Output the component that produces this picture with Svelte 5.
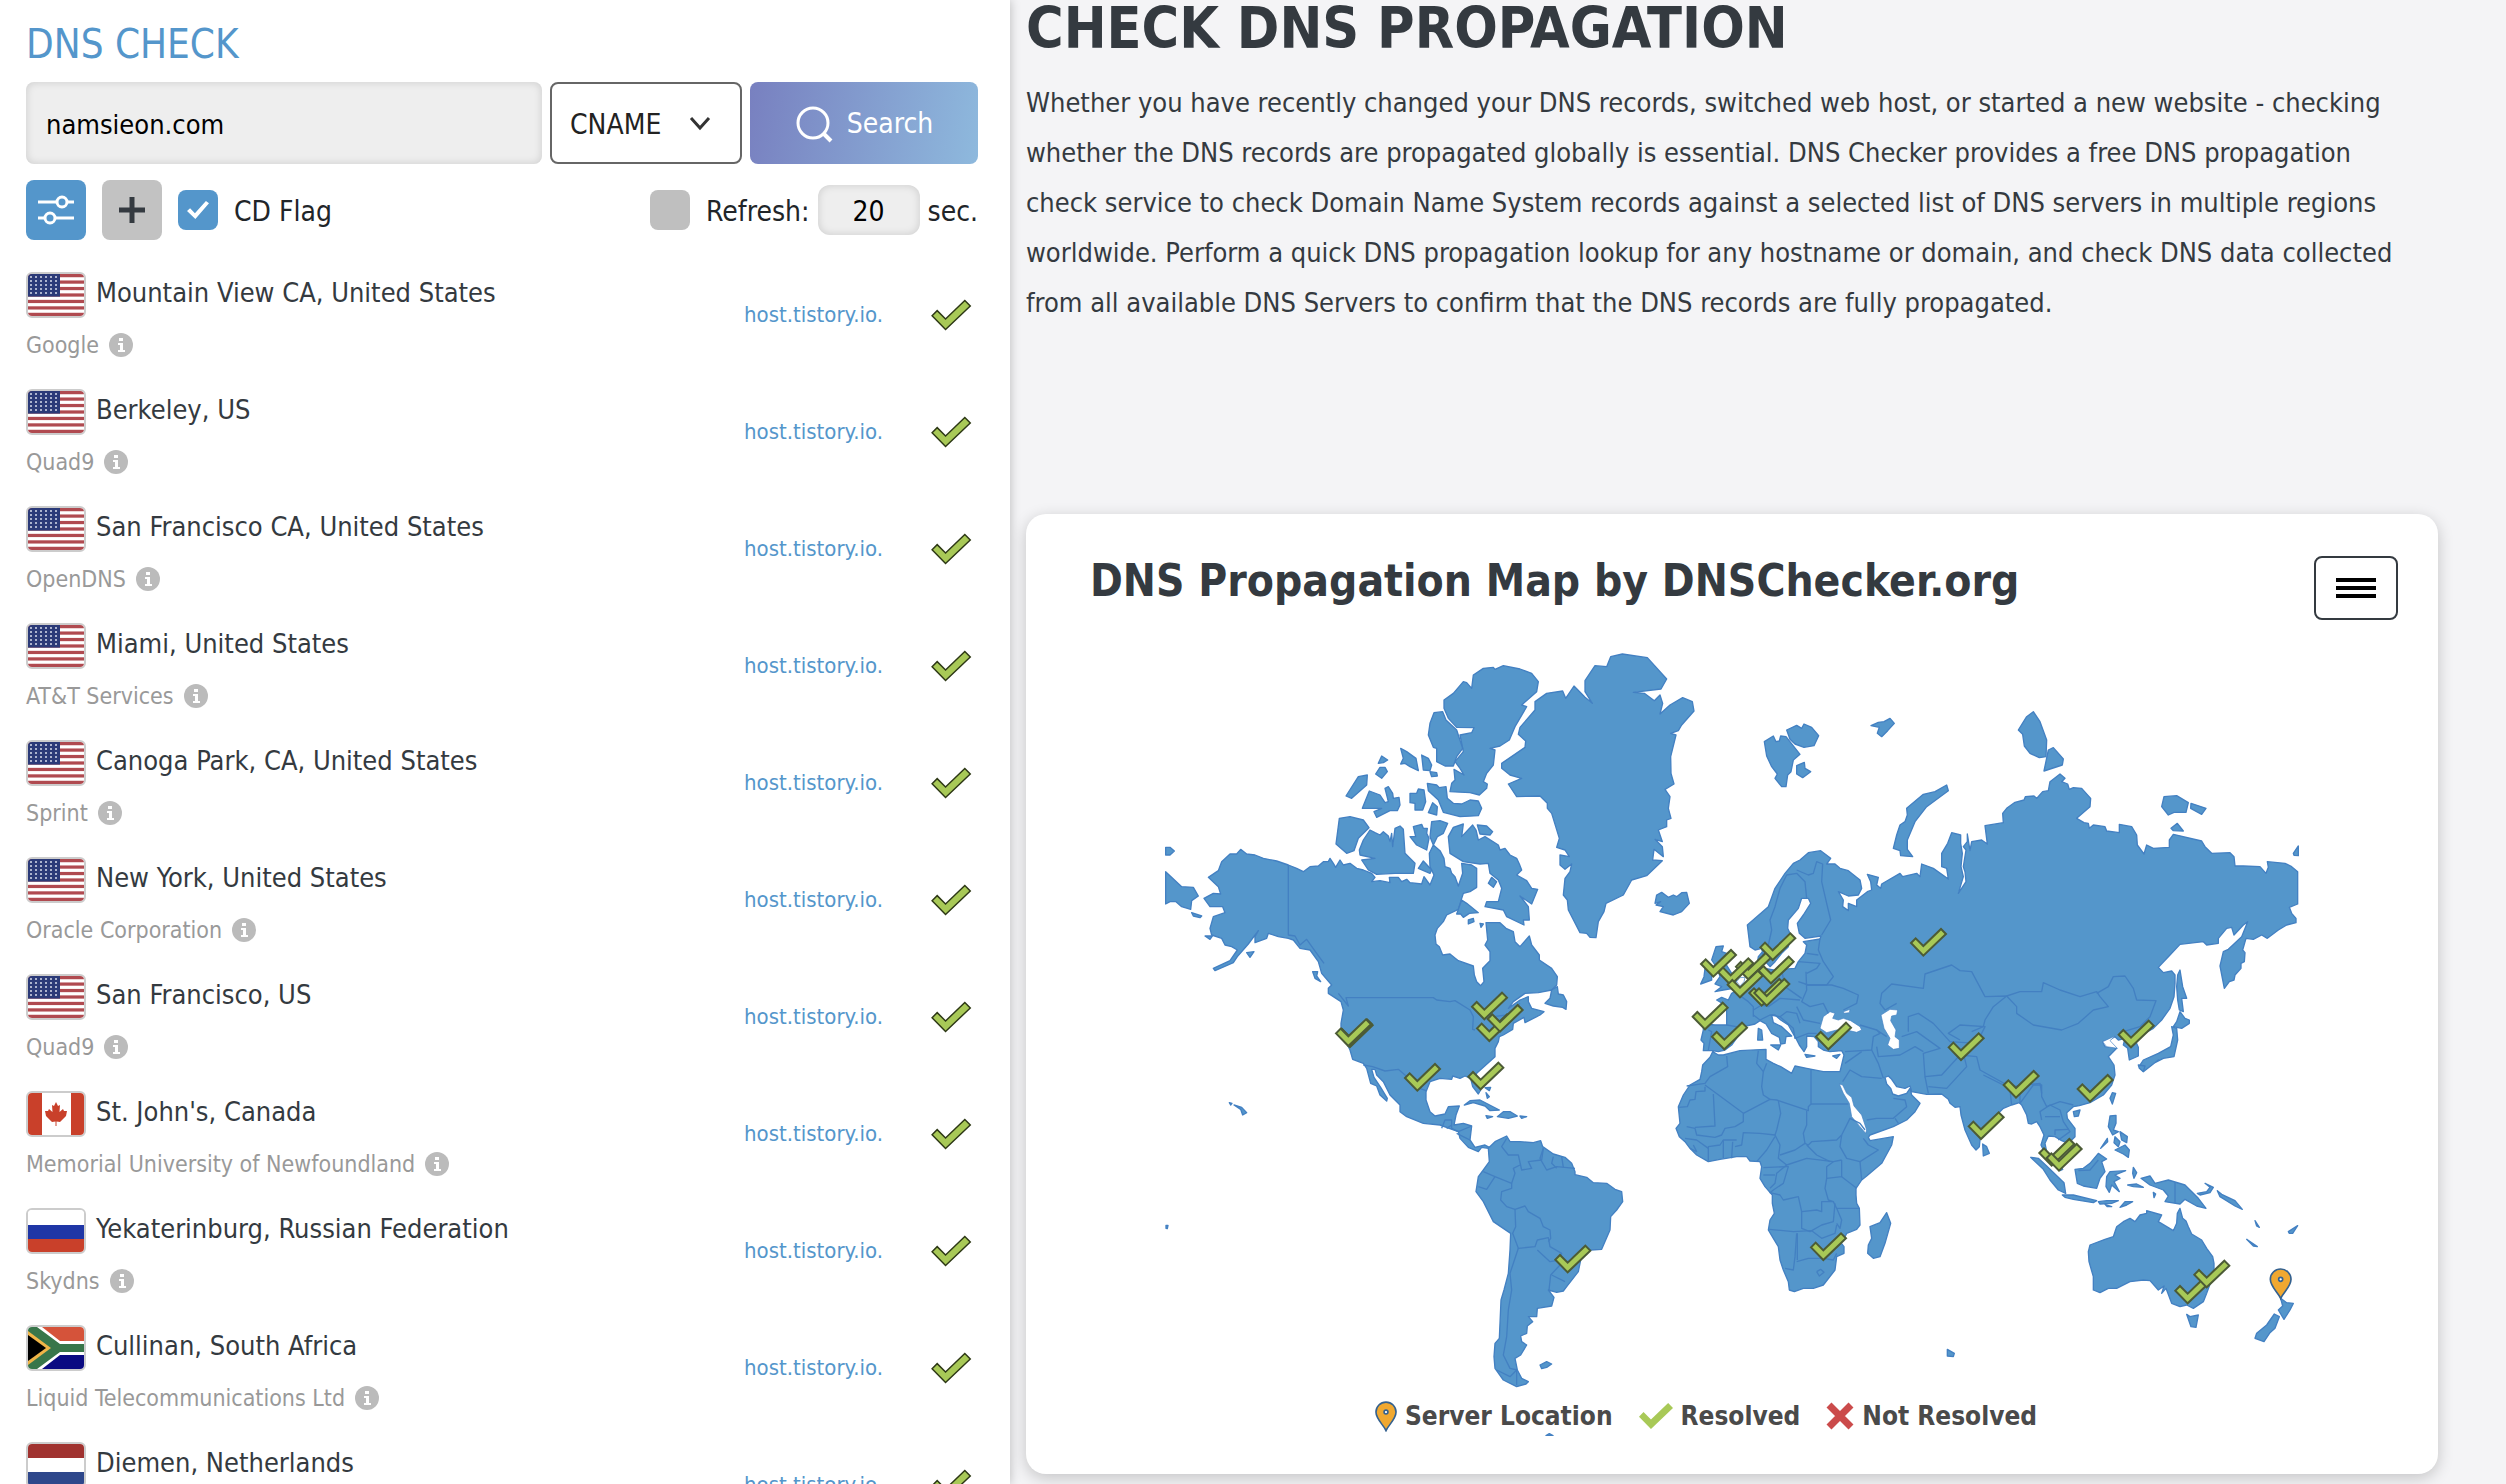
<script>
	let domain = 'namsieon.com';
	let recordType = 'CNAME';
	let cdFlag = true;
	let autoRefresh = false;
	let interval = '20';

	const recordTypes = ['A', 'AAAA', 'CNAME', 'MX', 'NS', 'TXT'];

	const servers = [
		{ place: 'Mountain View CA, United States', provider: 'Google', flag: 'us' },
		{ place: 'Berkeley, US', provider: 'Quad9', flag: 'us' },
		{ place: 'San Francisco CA, United States', provider: 'OpenDNS', flag: 'us' },
		{ place: 'Miami, United States', provider: 'AT&T Services', flag: 'us' },
		{ place: 'Canoga Park, CA, United States', provider: 'Sprint', flag: 'us' },
		{ place: 'New York, United States', provider: 'Oracle Corporation', flag: 'us' },
		{ place: 'San Francisco, US', provider: 'Quad9', flag: 'us' },
		{ place: "St. John's, Canada", provider: 'Memorial University of Newfoundland', flag: 'ca' },
		{ place: 'Yekaterinburg, Russian Federation', provider: 'Skydns', flag: 'ru' },
		{ place: 'Cullinan, South Africa', provider: 'Liquid Telecommunications Ltd', flag: 'za' },
		{ place: 'Diemen, Netherlands', provider: '', flag: 'nl' }
	];

	const tick = 'M-37 -38L-23 -52L0 -29L53 -80L68 -65L0 0Z';

	// moves a list of points by (dx, dy)
	function at(dx, dy, points) {
		return points
			.trim()
			.split(/\s+/)
			.map((p) => {
				const [x, y] = p.split(',').map(Number);
				return `${x + dx},${y + dy}`;
			})
			.join(' ');
	}

	const americas = [
		at(0, 0, '272,628 290,642 315,645 340,655 380,663 415,675 440,685 460,695 480,680 505,678 520,665 535,665 540,655 550,670 557,682 570,660 580,675 600,670 620,685 640,690 665,700 675,712 665,725 690,722 720,728 718,712 745,712 755,725 770,718 780,728 815,732 822,710 840,735 852,705 840,680 838,640 850,615 870,632 882,655 885,680 900,685 905,700 915,710 925,738 938,700 935,670 965,675 980,685 980,742 960,755 940,760 932,785 925,808 890,825 880,845 862,865 855,885 858,912 868,920 878,945 900,942 925,962 970,978 973,1005 980,1025 992,1037 1002,1025 998,985 1020,962 1020,935 1005,915 1013,900 1008,848 1050,848 1068,865 1090,875 1095,905 1110,920 1138,888 1145,915 1168,945 1168,960 1205,985 1222,1010 1220,1035 1205,1050 1165,1058 1125,1060 1090,1085 1075,1105 1110,1080 1135,1070 1135,1085 1145,1105 1182,1115 1170,1125 1125,1148 1122,1132 1090,1150 1088,1168 1060,1185 1048,1190 1045,1205 1035,1225 1035,1250 1000,1282 980,1300 975,1318'),
		at(0, 1080, '985,250 992,270 985,282 968,260 962,235 945,228 930,235 908,228 905,238 870,235 840,245 828,275 828,300 840,335 855,348 885,342 895,320 928,318 918,345 912,375 940,370 965,378 960,420 975,442 1005,435 1018,442 1035,425 1070,408 1080,425 1110,425 1150,428 1172,422 1178,440 1210,462 1245,472 1265,490 1275,515 1275,524 1310,532 1330,548'),
		at(750, 1260, '620,370 645,388 665,395 668,425 650,450 632,470 630,510 605,568 572,570 545,585 540,610 535,635 500,680 490,693 470,697 445,690 462,712 455,738 412,745 410,770 385,770 398,785 382,798 380,820 362,828 365,845 380,855 362,885 345,895 352,930 365,955 385,965 378,972 350,980 310,960 285,925 282,890 285,850 298,835 300,790 303,720 312,690 325,640 330,570 332,520 280,485 250,425 228,395 235,350 250,330 268,305 265,265 245,262 235,275 205,262 180,235 175,215 120,195 70,190 20,170 0,155'),
		at(0, 1080, '750,335 750,315 720,285 700,245 680,225 675,208 665,208 672,232 692,262 712,295 710,303 690,285 680,258 662,250 650,205 640,190 608,178 600,150 583,115 573,80'),
		at(0, 0, '573,1150 580,1110 573,1085 535,1060 535,1045 545,1035 515,1000 505,965 480,930 450,925 430,900 415,895 385,890 355,880 350,895 315,908 315,890 325,872 295,912 262,950 250,968 195,992 190,985 240,962 262,930 245,920 225,915 215,895 185,885 180,865 190,830 225,818 218,800 180,800 162,775 190,760 212,762 205,740 175,712 205,692 215,665 240,642 260,642')
	].join(' ');

	const oldWorld = [
		at(930, 0, '1020,660 1045,638 1082,632 1112,655 1100,672 1125,672 1140,685 1165,692 1200,720 1205,745 1195,765 1165,768 1135,755 1150,780 1148,800 1165,812 1165,790 1190,800 1190,780 1222,755 1235,750 1232,725 1222,703 1255,712 1250,735 1262,745'),
		at(2190, 120, '5,612 60,580 68,590 110,580 120,590 125,552 160,565 205,597 200,565 185,560 185,520 203,490 215,458 242,465 242,490 247,520 243,560 250,590 235,640 258,605 255,575 250,560 258,510 250,500 262,485 262,462 270,512 275,485 305,480 322,492 315,437 370,428 368,400 380,385 405,367 432,360 436,350 462,348 470,355 488,335 505,332 510,305 540,282 555,295 545,305 563,312 568,328 580,323 605,325 632,355 630,380 590,415 612,428 625,430 628,445 640,435 675,440 680,453 718,458 718,433 755,440 770,465 772,495 792,522 800,495 820,505 868,502 868,480 880,463 965,483 975,500 995,520 1050,518 1062,530 1065,558 1090,558 1140,560 1158,580 1165,562 1162,545 1215,550 1235,560 1253,575 1253,672 1228,682 1235,700 1248,715 1248,728 1220,735 1195,750 1162,775 1145,765 1120,778 1098,775 1088,810 1095,818 1093,845 1083,850 1083,865 1065,885 1062,900 1048,905 1033,925 1020,858 1030,815 1045,808 1085,770 1103,725 1090,735 1062,765 1055,742 1040,745 1015,775 1015,790 980,795 970,785 900,793 870,825 835,862 850,878 875,873 885,885 885,910'),
		at(2130, 960, '942,110 930,145 905,180 880,205 850,222 825,240 835,262 835,288 808,300 803,265 790,255 795,235 775,240 765,230 748,240 728,245 735,260 762,262 770,265 745,290 762,315 765,345 755,375 730,405 690,428 658,437 640,440 620,458 622,475 645,505 645,530 625,550 605,542 585,530 565,528 555,550 560,575 590,600 608,628 600,632 575,608 550,570 543,555 552,525 540,500 530,485 515,492 505,490 500,465 485,435 478,428 455,435 430,445 395,480 370,500 360,540 358,560 348,570 335,555 315,510 303,465 300,440 285,442 270,430 265,418 245,402 200,403 155,395 150,378 135,385 110,380 95,358 85,348 75,352 80,372 92,385 98,402 115,408 140,400 150,385 155,405 180,430 165,455 140,480 100,500 30,525'),
		at(1530, 780, '625,712 630,722 700,710 695,735 665,790 620,828 605,840 588,865 588,885 590,910 598,925 600,975 590,988 560,1000 555,1010 540,1025 552,1040 552,1055'),
		at(750, 1260, '1332,580 1310,590 1305,630 1270,675 1240,685 1210,685 1183,695 1168,690 1165,665 1150,630 1140,600 1135,560 1120,535 1105,510 1110,480 1123,460 1117,430 1117,405 1095,380 1080,355 1085,320 1080,305 1050,303 1040,290 1010,290 960,298 925,305 890,285 870,265 855,245 838,230 828,205 840,190 835,140 850,105 870,75 900,58'),
		at(1530, 780, '125,515 128,495 150,472 158,455 175,465 190,465 240,452 318,448 318,478 340,490 362,500 395,520 405,498 440,505 490,515 540,515 552,465 545,452 510,455 490,450 475,440 475,425 462,410 440,408 440,440 432,455 418,435 408,415 400,402 385,375 362,360 345,345 335,345 340,368 365,380 395,408 378,410 375,430 362,432 358,412 335,400 318,372 300,362 285,372 258,378 240,400 215,435 195,450 175,455 158,452 130,452 132,430 123,420 130,390 130,372 165,375 200,375 200,330 190,312 170,300 185,292 205,300 215,280 250,262 270,230 285,210 292,190 295,170 312,150 315,175 305,195'),
		at(930, 0, '915,985 940,990 1005,985 1015,965 1035,940 1040,915 1030,905 1080,897 1083,888 1035,895 1018,880 1012,850 1030,825 1052,790 1045,775 1025,775 1015,805 985,840 983,865 992,885 985,920 965,940 945,965 930,980 912,960 905,925 885,930 870,920 862,855 925,800 945,745 975,700 1000,670')
	].join(' ');

	const islands = [
		// Greenland
		at(930, 0, '225,185 260,160 308,153 317,175 342,138 375,172 397,190 375,155 375,122 405,77 440,80 452,50 487,42 562,53 620,117 603,147 520,157 553,160 583,182 600,165 608,190 600,222 630,195 668,173 697,185 702,213 665,255 655,272 632,280 648,285 632,350 633,400 642,432 615,448 630,470 625,505 633,535 620,540 620,560 595,570 607,605 585,598 607,620 610,650 582,628 578,660 607,662 560,707 515,720 490,765 438,790 432,815 415,845 408,893 390,892 380,880 360,878 325,810 322,780 310,765 315,715 330,695 335,672 315,688 300,675 300,645 328,650 315,630 290,622 298,595 275,520 262,505 262,490 240,468 170,470 145,432 185,415 150,405 125,385 125,370 195,322 197,303 175,283 180,262 225,210'),
		// Canadian Arctic
		'965,145 970,105 1000,85 1030,82 1035,88 1060,77 1110,87 1145,100 1165,125 1160,155 1115,195 1130,200 1095,260 1078,300 1050,318 1020,325 1035,330 1030,375 1010,400 1000,425 1012,432 1010,445 988,465 960,458 900,455 905,430 915,420 912,388 942,405 930,385 915,365 940,335 930,285 965,278 972,263 920,262 895,235 882,205 882,180 910,160 940,125 950,128',
		'852,218 878,215 888,240 920,270 938,325 920,350 910,378 885,378 860,365 860,325 850,322 835,285 840,250',
		'752,325 770,335 798,355 805,392 780,380 765,370 752,372 760,355',
		'815,345 835,355 845,375 840,392 820,390',
		'840,395 860,398 862,408 845,410',
		'695,348 713,360 700,368 685,370',
		'690,382 705,382 712,395 695,415 677,402',
		'625,410 652,405 650,435 605,475 588,468',
		'658,453 690,465 705,488 715,485 705,445 715,440 728,460 730,475 747,472 750,495 742,512 720,512 680,532 672,515 695,505 637,505',
		'780,460 800,460 805,447 822,450 827,485 818,510 795,510 795,490 780,488',
		'832,430 860,435 868,443 888,440 892,475 910,490 935,492 960,480 985,483 995,505 985,527 930,530 880,517 865,480 835,452',
		'848,488 862,500 860,525 835,518',
		'568,535 600,530 640,540 657,563 625,595 612,632 590,640 558,612',
		'628,630 640,600 660,570 675,578 690,585 700,575 715,588 720,605 725,580 728,620 735,565 750,558 760,568 765,640 795,670 790,700 735,700 680,703 655,690 635,660 675,655 630,645',
		'790,560 815,553 820,565 832,565 830,580 837,595 830,630 800,615 780,590 797,590',
		'845,545 870,542 893,550 880,580 862,590 850,615 840,590',
		'820,663 845,690 840,700 805,685',
		'895,590 910,562 940,552 935,590 968,555 978,570 985,600 1005,590 1045,615 1050,630 1065,625 1080,645 1100,655 1108,672 1115,690 1100,705 1130,722 1145,745 1163,748 1145,792 1110,768 1135,800 1138,840 1120,840 1122,855 1070,830 1060,810 1005,800 1010,785 1045,785 1055,745 1045,720 1020,700 1015,670 990,672 940,665 900,640',
		'982,555 1010,558 1028,575 1020,585 990,582',
		'1025,712 1040,725 1030,742 1015,730',
		'935,780 950,790 985,818 958,820 940,832 932,822 920,822',
		'955,840 970,835 972,845 955,852',
		'990,850 1000,852 993,862',
		// Newfoundland and the Bering coast
		'1222,1040 1225,1062 1240,1065 1250,1085 1248,1108 1238,1102 1210,1098 1185,1090 1200,1075 1205,1050',
		'47,695 95,740 130,742 145,768 125,782 122,808 95,800 78,785 60,785 47,792',
		'47,622 60,622 73,633 60,645 47,645',
		'125,818 155,828 150,833 130,828',
		'290,938 312,935 300,952',
		'488,995 503,995 500,1008 512,1025 495,1015',
		'165,888 187,888 180,898',
		// Hawaii, the Caribbean
		at(0, 1080, '252,315 275,322 290,338 278,345 272,328'),
		at(0, 1080, '238,308 246,310 242,315'),
		at(0, 1080, '48,676 54,676 52,686 48,685'),
		at(0, 1080, '943,315 960,302 990,300 1048,330 1020,332 1005,318 970,308'),
		at(0, 1080, '1042,350 1060,335 1080,335 1102,348 1075,355'),
		at(0, 1080, '1008,347 1028,350 1012,355'),
		at(0, 1080, '1110,348 1130,350 1115,355'),
		at(0, 1080, '1008,278 1018,290 1012,295'),
		at(0, 1080, '1005,263 1022,262 1018,272'),
		at(750, 1260, '420,915 440,905 455,912 440,922 425,926'),
		at(750, 1260, '438,1127 448,1121 459,1127'),
		// Europe
		at(930, 0, '585,790 590,765 605,757 625,772 640,765 650,770 665,758 680,757 688,790 665,815 640,825 600,815 610,800 588,795 602,785'),
		at(930, 0, '768,920 790,918 785,935 800,940 790,960 815,1000 830,1020 820,1045 790,1050 765,1055 785,1040 765,1032 780,1010 772,985 755,960'),
		at(930, 0, '735,985 755,990 755,1020 722,1032 732,1010'),
		at(930, 0, '895,1165 905,1170 908,1200 893,1200'),
		at(930, 0, '932,1215 962,1215 955,1230'),
		at(930, 0, '1035,1243 1065,1248 1040,1252'),
		at(930, 0, '1118,1248 1140,1243 1130,1255'),
		at(930, 0, '913,305 940,288 948,305 958,303 962,288 978,290 1020,343 1000,360 993,395 983,405 978,440 965,440 945,415 952,402 935,380 920,348'),
		at(930, 0, '980,270 1010,256 1025,265 1032,252 1055,262 1076,287 1062,317 1032,322 1005,312 990,298'),
		at(930, 0, '1010,377 1033,367 1035,385 1052,395 1028,413 1010,402'),
		at(930, 0, '1233,257 1255,247 1272,245 1290,235 1303,250 1283,272 1265,290 1252,280 1258,262'),
		// Russian Arctic
		at(2190, 120, '80,385 130,343 165,335 200,315 205,332 140,380 105,425 82,480 82,508 98,530 62,527 60,512 40,505 50,465 60,435 75,425 82,405'),
		at(2190, 120, '415,150 440,110 460,95 480,125 500,180 498,230 478,233 450,220 433,198 428,163'),
		at(2190, 120, '505,210 520,203 550,237 547,255 492,273'),
		at(2190, 120, '852,350 890,347 925,368 918,397 882,397 865,405 845,380'),
		at(2190, 120, '933,370 978,385 965,403 932,385'),
		at(2190, 120, '873,445 892,430 910,453 880,452'),
		at(2190, 120, '1240,520 1255,498 1255,527 1242,526'),
		// Sakhalin, Japan, Taiwan
		at(2190, 120, '900,870 908,920 920,955 905,955 910,995 898,990 893,960 890,920 893,885'),
		at(2190, 120, '900,995 915,1015 928,1020 928,1030 905,1045 880,1040 890,1025'),
		at(2190, 120, '875,1040 890,1045 893,1080 882,1130 850,1135 825,1148 835,1140 790,1175 780,1155 790,1140 835,1120 872,1100 880,1065'),
		at(2130, 960, '835,315 855,318 850,335 838,325'),
		at(2130, 960, '757,398 767,400 757,432 750,415'),
		at(2130, 960, '640,455 660,450 655,468 643,470'),
		at(2130, 960, '368,552 380,560 388,580 370,588'),
		// South-east Asia
		at(2130, 960, '750,468 768,466 768,490 760,510 775,515 758,525 745,500'),
		at(2130, 960, '780,515 802,530 800,548 785,540'),
		at(2130, 960, '765,570 795,555 808,570 805,592 790,582'),
		at(2130, 960, '742,535 743,545 722,565'),
		at(2130, 960, '765,530 780,545 775,560 762,548'),
		at(2130, 960, '512,592 535,595 560,618 612,668 617,700 595,690 570,660 550,628'),
		at(2130, 960, '607,705 640,705 710,722 700,728 640,718 615,712'),
		at(2130, 960, '645,628 670,625 690,610 715,580 740,597 725,605 735,635 720,655 710,685 670,678 652,670'),
		at(2130, 960, '740,650 750,635 797,632 765,645 780,655 762,665 778,695 755,675 748,697 738,680'),
		at(2130, 960, '820,622 830,638 822,655 818,640'),
		at(2130, 960, '803,675 830,672 850,682 820,680'),
		at(2130, 960, '715,725 740,722 775,722 755,730 720,732'),
		at(2130, 960, '780,742 795,725 818,725 800,735'),
		at(2130, 960, '735,733 755,740 742,740'),
		at(2130, 960, '880,697 887,702 882,713'),
		at(2130, 960, '843,655 870,648 885,670 925,660 975,675 1015,715 1038,745 1010,738 975,718 960,732 915,725 925,708 910,690 870,675'),
		at(2130, 960, '1012,700 1040,695 1050,682 1035,670 1060,682 1050,698 1020,705'),
		at(2130, 960, '1072,692 1085,703 1125,722 1147,748 1125,738 1080,710'),
		at(2130, 960, '1185,782 1198,802 1190,798'),
		at(2130, 960, '1160,838 1192,860 1180,858'),
		at(2130, 960, '1285,815 1313,797 1298,820 1288,820'),
		// Australia, New Zealand
		at(2130, 960, '690,855 735,838 760,830 770,800 790,785 810,775 825,785 840,765 860,760 860,752 905,765 895,785 940,812 950,790 952,760 960,745 968,775 978,783 985,800 995,822 1025,840 1040,865 1058,890 1062,910 1062,940 1040,1000 1030,1025 1000,1045 980,1035 960,1040 935,1030 918,985 905,1000 912,978 895,990 870,962 850,960 810,965 770,985 745,985 720,998 700,990 700,950 687,905 685,875'),
		at(2130, 960, '980,1063 990,1070 1015,1065 1008,1102 993,1100'),
		at(2130, 960, '1262,1015 1280,1028 1300,1030 1290,1050 1272,1078 1255,1050 1268,1038'),
		at(2130, 960, '1243,1062 1258,1070 1245,1105 1230,1118 1212,1145 1185,1135 1190,1120 1220,1095'),
		at(2130, 960, '262,1168 283,1180 280,1190 262,1188'),
		// Madagascar
		at(750, 1260, '1460,458 1472,490 1455,550 1440,590 1420,595 1403,580 1405,555 1415,535 1410,500 1440,488')
	];

	const waters = [
		at(1530, 780, '538,552 548,555 560,580 575,592 582,618 605,645 620,690 617,700 600,680 575,650 568,610 550,580'),
		at(1530, 780, '480,385 490,350 510,335 525,340 518,355 535,360 550,355 572,362 600,380 605,390 590,397 560,390 530,390 500,398'),
		at(1530, 780, '550,335 570,328 568,338 552,340'),
		at(1530, 780, '663,345 690,328 713,330 710,345 695,348 692,362 708,390 705,410 718,420 718,445 700,448 683,435 690,415 672,385'),
		at(1530, 780, '230,245 240,233 255,232 252,245 240,258'),
		at(2190, 120, '668,1085 705,1068 690,1082 712,1105 680,1100')
	];

	const borders = [
		// North America
		'415,675 415,885 435,888 450,915 470,898 500,940 522,970',
		'565,1060 595,1098 588,1073 850,1073 860,1080 900,1085 915,1082 960,1110 970,1130 968,1168 975,1170',
		'1030,1130 1070,1125 1110,1090',
		at(0, 1080, '640,195 668,200 705,213 745,208 765,225 800,262 828,272'),
		at(0, 1080, '875,385 885,360 905,360 905,385 925,395 965,378'),
		at(0, 1080, '905,375 890,385'),
		at(0, 1080, '920,400 950,415 960,420'),
		// South America
		at(750, 1260, '320,235 305,260 325,285 355,285 365,330 395,325 385,305 425,300 430,265'),
		at(750, 1260, '430,265 420,295 440,330 470,320 525,325'),
		at(750, 1260, '460,290 455,310 470,325'),
		at(750, 1260, '485,290 490,322'),
		at(750, 1260, '250,335 285,350 335,370 345,340 340,325 360,315'),
		at(750, 1260, '235,380 260,388 285,350'),
		at(750, 1260, '335,370 335,385 305,395 302,420 320,440 345,448 375,438 385,455 420,475 430,500 450,510 452,535 445,545'),
		at(750, 1260, '345,448 347,500 338,520 355,565 405,560 412,540 445,533 450,560 485,580 480,600 450,605 412,570'),
		at(750, 1260, '355,565 330,640 335,690 325,750 320,830 310,885 330,925 352,930'),
		at(750, 1260, '480,615 452,645 447,690'),
		at(750, 1260, '455,645 495,665'),
		at(750, 1260, '290,930 330,950 350,930 350,975'),
		// Africa
		at(1530, 780, '200,468 203,500 150,530 135,550 80,558'),
		at(1530, 780, '135,560 135,573 108,575 105,598 90,600 82,620 55,622'),
		at(1530, 780, '135,555 250,640 250,665 225,680 195,685 185,705 165,712 110,705 105,685 80,680'),
		at(1530, 780, '160,582 165,678 105,682'),
		at(1530, 780, '250,640 330,598 350,600 445,632 445,620 453,612 453,508'),
		at(1530, 780, '453,612 565,612'),
		at(1530, 780, '295,452 290,490 310,515 305,560 310,585 330,598'),
		at(1530, 780, '310,515 320,490'),
		at(1530, 780, '355,602 362,640 350,690 345,705 300,700 250,698 245,735 225,740'),
		at(1530, 780, '440,632 440,675 430,700 435,730 445,735 455,725 530,720 545,705'),
		at(1530, 780, '545,705 570,655 600,670 615,690'),
		at(1530, 780, '545,705 540,740 560,775 600,785 655,750 625,735 610,715'),
		at(1530, 780, '600,785 605,840'),
		at(1530, 780, '345,705 360,735 355,775 380,795 440,775 520,785 545,780'),
		at(1530, 780, '435,730 405,750 360,765'),
		at(1530, 780, '440,735 470,765 510,785'),
		at(1530, 780, '345,710 320,750 290,785'),
		at(1530, 780, '310,803 380,800 385,800 370,850 340,870 330,878 360,885 370,900 415,890 425,935 470,930 485,935 485,905 520,905'),
		at(1530, 780, '380,795 350,820 345,850 330,865'),
		at(1530, 780, '310,825 345,825'),
		at(1530, 780, '545,780 545,830 500,835 495,865 505,900 520,905 530,925 598,925'),
		at(1530, 780, '545,830 590,865'),
		at(1530, 780, '500,835 500,800 520,785'),
		at(1530, 780, '425,935 425,985 450,995 485,975 520,965 525,910'),
		at(1530, 780, '530,925 545,960 540,985 530,970'),
		at(1530, 780, '328,988 400,995 455,992 485,1015 525,1000 530,975'),
		at(1530, 780, '412,1000 412,1080'),
		at(750, 1260, '1190,520 1185,590 1180,630 1155,625'),
		at(750, 1260, '1190,605 1225,595 1270,595 1300,600 1310,580'),
		at(750, 1260, '1250,635 1262,628 1272,637 1258,648 1250,635'),
		at(1530, 780, '145,782 145,740 180,735 190,720 230,720'),
		at(1530, 780, '190,775 190,720'),
		at(1530, 780, '215,775 218,725'),
		at(1530, 780, '100,735 110,755 90,745'),
		at(1530, 780, '145,745 110,720 75,715'),
		// Europe
		at(930, 0, '925,915 935,870 930,840 945,800 960,745 980,705 1010,700 1035,725 1040,775'),
		at(930, 0, '1010,690 1045,705 1060,700 1070,665 1088,672 1085,725 1100,790 1112,840 1085,885'),
		at(930, 0, '1080,895 1075,930 1090,965 1120,1010 1100,1035 1045,1035 1015,1025'),
		at(930, 0, '1040,940 1075,945'),
		at(930, 0, '1015,965 1080,970 1070,985 1040,1000'),
		at(930, 0, '1038,995 1040,1050 1025,1085 1050,1100 1090,1090 1105,1120'),
		at(930, 0, '1040,1035 1115,1035 1150,1045 1195,1065 1190,1090 1150,1110'),
		at(930, 0, '965,990 975,1040 1025,1075'),
		at(930, 0, '880,1110 905,1095 925,1100 960,1075 1020,1080'),
		at(930, 0, '880,1130 880,1100 865,1085 830,1060'),
		at(930, 0, '880,1125 900,1140 930,1125 960,1130 980,1115 1010,1120 1020,1150'),
		at(930, 0, '960,1130 1000,1165 1005,1195 1045,1180 1070,1180'),
		at(930, 0, '1010,1100 1030,1140 1080,1150'),
		at(930, 0, '800,1155 860,1165'),
		at(930, 0, '745,1170 755,1175 745,1230'),
		// Middle East, Caucasus
		at(1530, 780, '600,375 650,390 660,400 640,410 635,450 555,455'),
		at(1530, 780, '650,390 680,410'),
		at(1530, 780, '635,450 655,490 670,535'),
		at(1530, 780, '555,490 605,455'),
		at(1530, 780, '548,545 570,510 605,530 665,535'),
		at(1530, 780, '620,660 650,655 700,655 740,620 735,600 700,595'),
		at(1530, 780, '705,655 715,670'),
		// Asia
		at(2130, 960, '110,130 75,150 60,130 65,100 95,72 190,85 195,42 275,15 300,32 335,35 375,110 440,108 400,140 375,180 370,200 335,215'),
		at(2130, 960, '145,215 145,170 175,160 220,190 270,245 350,250 375,200 300,195 265,220 300,240'),
		at(2130, 960, '125,230 170,215 240,265 190,280 195,350 245,345 300,285 350,290 360,330 450,380 540,370 545,400'),
		at(2130, 960, '50,260 55,290 120,285 165,260 190,275'),
		at(2130, 960, '195,350 205,400'),
		at(2130, 960, '205,380 260,385 320,320 310,280'),
		at(2130, 960, '370,345 440,380 450,390'),
		at(2130, 960, '440,108 480,95 545,95 550,68 600,90 660,110 710,95 720,110 745,140 700,150 655,190 605,210 520,195 470,160 470,140 440,108'),
		at(2130, 960, '710,100 745,80 760,50 795,48 820,85 830,120 888,122 870,170 840,200 790,215'),
		at(2130, 960, '455,435 450,390 480,385 480,430 520,375 545,375 545,410 560,440 600,425 640,435'),
		at(2130, 960, '545,480 540,455 570,435 600,450 610,485 630,515 595,540'),
		at(2130, 960, '585,525 585,510 625,508'),
		at(2130, 960, '555,470 600,470'),
		at(2130, 960, '655,632 690,630 715,600'),
		at(2130, 960, '945,668 945,728')
	];

	const markers = [
		[600, 1221], [598, 1218], [595, 1218], [1003, 1138], [1018, 1203], [1050, 1175], [802, 1352], [992, 1348],
		[1795, 1018], [1690, 1010], [1742, 1035], [1770, 1072], [1868, 960], [1863, 1030],
		[1835, 1097], [1850, 1097], [1665, 1168], [1723, 1228], [2035, 1228], [2320, 947],
		[2433, 1260], [2598, 1373], [2820, 1385], [2943, 1222], [2493, 1497], [2705, 1577],
		[2727, 1592], [3113, 1990], [3170, 1942], [1253, 1897], [2020, 1860]
	];
</script>

<div class="page">
	<section class="checker">
		<h2>DNS CHECK</h2>

		<form class="search" on:submit|preventDefault>
			<input class="domain" type="text" aria-label="Domain" bind:value={domain} />
			<div class="select">
				<select aria-label="Record type" bind:value={recordType}>
					{#each recordTypes as type}
						<option>{type}</option>
					{/each}
				</select>
				<svg viewBox="0 0 24 24" width="24" height="24" aria-hidden="true">
					<path d="M3 7L12 17L21 7" fill="none" stroke="#333" stroke-width="3" />
				</svg>
			</div>
			<button class="submit" type="submit">
				<svg viewBox="0 0 38 38" width="38" height="38" aria-hidden="true">
					<circle cx="18" cy="18" r="15" fill="none" stroke="#fff" stroke-width="3" />
					<path d="M29 29L36 36" stroke="#fff" stroke-width="4" />
				</svg>
				Search
			</button>
		</form>

		<div class="options">
			<button class="square blue" aria-label="Settings">
				<svg viewBox="0 0 36 30" width="36" height="30" fill="none" stroke="#fff" stroke-width="3" aria-hidden="true">
					<path d="M0 7H18M30 7H36M0 23H6M18 23H36" />
					<circle cx="24" cy="7" r="5" />
					<circle cx="12" cy="23" r="5" />
				</svg>
			</button>
			<button class="square grey" aria-label="Add">
				<svg viewBox="0 0 26 26" width="26" height="26" aria-hidden="true">
					<path d="M13 0V26M0 13H26" stroke="#343a40" stroke-width="5" />
				</svg>
			</button>
			<input id="cd-flag" type="checkbox" bind:checked={cdFlag} />
			<label for="cd-flag">CD Flag</label>
			<div class="refresh">
				<input id="refresh" type="checkbox" bind:checked={autoRefresh} />
				<label for="refresh">Refresh:</label>
				<input class="seconds" type="text" aria-label="Refresh interval" bind:value={interval} />
				<span>sec.</span>
			</div>
		</div>

		<table class="servers">
			<tbody>
				{#each servers as server}
					<tr>
						<td class="server">
							<div class="place">
								<svg class="flag" viewBox="0 0 56 42" preserveAspectRatio="none" aria-hidden="true">
									{#if server.flag === 'us'}
										<rect width="56" height="42" fill="#fff" />
										{#each [0, 2, 4, 6, 8, 10, 12] as stripe}
											<rect y={(stripe * 42) / 13} width="56" height={42 / 13} fill="#b04a50" />
										{/each}
										<rect width="32" height="22.6" fill="#2b3a78" />
										{#each [3, 7, 11, 15, 19] as y}
											{#each [3, 8, 13, 18, 23, 28] as x}
												<circle cx={x} cy={y} r="1" fill="#d8dcea" />
											{/each}
										{/each}
									{:else if server.flag === 'ca'}
										<rect width="56" height="42" fill="#fff" />
										<rect width="14" height="42" fill="#c9402a" />
										<rect x="43" width="13" height="42" fill="#c9402a" />
										<path d="M28 9L30 13L32 12L31.500 19L35 16L36 18L39 18L38 23L32 29L28.500 28.500V33H27.500V28.500L24 29L18 23L17 18L20 18L21 16L24.500 19L24 12L26 13Z" fill="#c9402a" />
									{:else if server.flag === 'ru'}
										<rect width="56" height="42" fill="#fff" />
										<rect y="15" width="56" height="14" fill="#1f36a6" />
										<rect y="29" width="56" height="13" fill="#c9402a" />
									{:else if server.flag === 'za'}
										<rect width="56" height="42" fill="#fff" />
										<path d="M14 0H56V14H32Z" fill="#d5533a" />
										<path d="M14 42H56V28H32Z" fill="#0a0a82" />
										<path d="M0 0H9L32 17H56V25H32L9 42H0Z" fill="#38764a" />
										<path d="M0 4L23 21L0 38Z" fill="#f0b548" />
										<path d="M0 8L18 21L0 34Z" />
									{:else}
										<rect width="56" height="42" fill="#fff" />
										<rect width="56" height="14" fill="#a0322f" />
										<rect y="28" width="56" height="14" fill="#2e478b" />
									{/if}
								</svg>
								<span>{server.place}</span>
							</div>
							<div class="provider">
								{server.provider}
								<svg viewBox="0 0 24 24" width="24" height="24" aria-hidden="true">
									<circle cx="12" cy="12" r="12" fill="#bbb" />
									<path d="M10 5H14V8H10ZM9 10H14V17H16V19H9V17H11V12H9Z" fill="#fff" />
								</svg>
							</div>
						</td>
						<td class="host"><a href="#host">host.tistory.io.</a></td>
						<td class="status">
							<svg viewBox="-42 -84 114 88" width="42" height="32" role="img" aria-label="Resolved">
								<path d={tick} fill="#a8c957" stroke="#2d3815" stroke-width="4" />
							</svg>
						</td>
					</tr>
				{/each}
			</tbody>
		</table>
	</section>

	<main>
		<h1>CHECK DNS PROPAGATION</h1>
		<p>
			Whether you have recently changed your DNS records, switched web host, or started a new website - checking
			whether the DNS records are propagated globally is essential. DNS Checker provides a free DNS propagation
			check service to check Domain Name System records against a selected list of DNS servers in multiple regions
			worldwide. Perform a quick DNS propagation lookup for any hostname or domain, and check DNS data collected
			from all available DNS Servers to confirm that the DNS records are fully propagated.
		</p>

		<div class="card">
			<header>
				<h3>DNS Propagation Map by DNSChecker.org</h3>
				<button class="menu" aria-label="Menu">
					<svg viewBox="0 0 40 20" width="40" height="20" aria-hidden="true">
						<path d="M0 2H40M0 10H40M0 18H40" stroke="#000" stroke-width="4" />
					</svg>
				</button>
			</header>

			<div class="map">
				<svg viewBox="45 0 3402 2388" role="img" aria-label="World map of DNS servers">
					<g class="land">
						<polygon points={americas} />
						<polygon points={oldWorld} />
						{#each islands as points}
							<polygon {points} />
						{/each}
					</g>
					<g class="water">
						{#each waters as points}
							<polygon {points} />
						{/each}
					</g>
					<g class="borders">
						{#each borders as points}
							<polyline {points} />
						{/each}
					</g>
					{#each markers as [x, y]}
						<path d={tick} transform="translate({x} {y})" fill="#a8c957" stroke="#4c5b36" stroke-width="6" />
					{/each}
					<g transform="translate(3392 1975)">
						<path d="M0 0C-8 -18 -31 -35 -31 -57A31 31 0 0 1 31 -57C31 -35 8 -18 0 0Z" fill="#f0a830" stroke="#34618f" stroke-width="5" />
						<circle cy="-57" r="6" fill="#fff" stroke="#34618f" stroke-width="5" />
					</g>
				</svg>

				<ul class="legend">
					<li>
						<svg viewBox="-34 -92 68 94" width="22" height="32" aria-hidden="true">
							<path d="M0 0C-8 -18 -31 -35 -31 -57A31 31 0 0 1 31 -57C31 -35 8 -18 0 0Z" fill="#f0a830" stroke="#34618f" stroke-width="5" />
							<circle cy="-57" r="6" fill="#fff" stroke="#34618f" stroke-width="5" />
						</svg>
						Server Location
					</li>
					<li>
						<svg viewBox="-37 -80 105 80" width="34" height="28" aria-hidden="true">
							<path d={tick} fill="#a8c957" />
						</svg>
						Resolved
					</li>
					<li>
						<svg viewBox="0 0 28 28" width="28" height="28" aria-hidden="true">
							<path d="M3 3L25 25M25 3L3 25" stroke="#cb4b4b" stroke-width="7" />
						</svg>
						Not Resolved
					</li>
				</ul>
			</div>
		</div>
	</main>
</div>

<style>
	:global(body) {
		background: #f4f4f6;
	}

	.page {
		display: grid;
		grid-template-columns: 1010fr 1496fr;
		height: 100vh;
		overflow: hidden;
		font-family: 'DejaVu Sans Condensed', 'Noto Sans', sans-serif;
		font-size: 28px;
		color: #343a40;
	}

	.page * {
		box-sizing: border-box;
	}

	h1, h2, h3, p, ul {
		margin: 0;
	}

	input, select, button {
		font: inherit;
		border: 0;
		border-radius: 8px;
	}

	.checker {
		padding: 16px 32px 0 26px;
		background: #fff;
		box-shadow: 0 0 10px rgba(0, 0, 0, 0.25);
		overflow: hidden;
	}

	h2 {
		font-size: 40px;
		font-weight: 400;
		line-height: 56px;
		color: #5496cb;
	}

	.search {
		display: flex;
		gap: 8px;
		height: 82px;
		margin-top: 10px;
	}

	.domain {
		flex: 1;
		min-width: 0;
		padding: 2px 20px 0;
		background: #eee;
		box-shadow: inset 0 0 8px rgba(0, 0, 0, 0.15);
		font-size: 27px;
	}

	.select {
		display: grid;
		width: 192px;
	}

	.select select,
	.select svg {
		grid-area: 1 / 1;
	}

	.select select {
		padding: 2px 18px 0;
		border: 2px solid #666;
		background: #fff;
		color: #222;
		appearance: none;
	}

	.select svg {
		place-self: center end;
		margin-right: 30px;
		pointer-events: none;
	}

	.submit {
		display: flex;
		align-items: center;
		justify-content: center;
		gap: 14px;
		width: 228px;
		padding-top: 2px;
		background: linear-gradient(100deg, #7880c0, #8eb9dd);
		color: #fff;
	}

	.options {
		display: flex;
		align-items: center;
		gap: 16px;
		height: 60px;
		margin-top: 16px;
		color: #212529;
	}

	.options label,
	.options span {
		padding-top: 2px;
	}

	.square {
		display: grid;
		place-items: center;
		width: 60px;
		height: 60px;
		padding: 0;
	}

	.blue {
		background: #5496cb;
	}

	.grey {
		background: #c2c2c2;
	}

	input[type='checkbox'] {
		display: grid;
		place-items: center;
		width: 40px;
		height: 40px;
		margin: 0;
		background: #bfbfbf;
		appearance: none;
	}

	input[type='checkbox']:checked {
		background: #5496cb;
	}

	input[type='checkbox']:checked::before {
		content: '';
		width: 22px;
		height: 18px;
		background: #fff;
		clip-path: polygon(0 55%, 14% 40%, 36% 68%, 86% 0, 100% 12%, 38% 100%);
	}

	.refresh {
		display: flex;
		align-items: center;
		gap: 8px;
		margin-left: auto;
	}

	.refresh label {
		margin-left: 8px;
	}

	.seconds {
		width: 102px;
		height: 50px;
		padding: 2px 0 0;
		border-radius: 12px;
		background: #eee;
		box-shadow: inset 0 0 8px rgba(0, 0, 0, 0.15);
		text-align: center;
	}

	.servers {
		width: 100%;
		margin-top: 16px;
		border-collapse: collapse;
		font-size: 27px;
	}

	.servers tr {
		height: 117px;
	}

	.servers td {
		padding: 0;
	}

	.servers .server {
		padding-top: 10px;
	}

	.place {
		display: flex;
		gap: 10px;
		height: 50px;
	}

	.place span {
		line-height: 42px;
	}

	.flag {
		width: 60px;
		height: 46px;
		border: 2px solid #ccc;
		border-radius: 6px;
	}

	.provider {
		display: flex;
		align-items: center;
		gap: 10px;
		height: 46px;
		font-size: 23px;
		color: #999;
	}

	.host {
		width: 186px;
		font-size: 22px;
	}

	.host a {
		color: #5496cb;
		text-decoration: none;
	}

	.status {
		width: 48px;
	}

	.status svg {
		display: block;
	}

	main {
		padding: 0 68px 10px 16px;
	}

	h1 {
		font-size: 57px;
		line-height: 56px;
	}

	p {
		margin-top: 22px;
		padding-right: 24px;
		font-size: 27px;
		line-height: 50px;
	}

	.card {
		margin-top: 186px;
		padding: 42px 40px 38px 64px;
		border-radius: 20px;
		background: #fff;
		box-shadow: 0 4px 16px rgba(0, 0, 0, 0.2);
	}

	header {
		display: flex;
		justify-content: space-between;
	}

	h3 {
		font-size: 44px;
		line-height: 50px;
	}

	.menu {
		display: grid;
		place-items: center;
		width: 84px;
		height: 64px;
		border: 2px solid #343a40;
		background: #fff;
	}

	.map {
		position: relative;
		margin: 20px 99px 0 75px;
	}

	.map > svg {
		display: block;
		width: 100%;
	}

	.land {
		fill: #5496cb;
		stroke: #4380c2;
		stroke-width: 4;
		stroke-linejoin: round;
	}

	.water {
		fill: #fff;
		stroke: #4380c2;
		stroke-width: 2;
	}

	.borders {
		fill: none;
		stroke: #4380c2;
		stroke-width: 4;
		stroke-linejoin: round;
	}

	.legend {
		position: absolute;
		right: 0;
		bottom: 4px;
		left: 0;
		display: flex;
		justify-content: center;
		gap: 26px;
		padding: 0 52px 0 0;
		font-size: 26px;
		font-weight: 700;
		color: #4a4a4a;
		list-style: none;
	}

	.legend li {
		display: flex;
		align-items: center;
		gap: 8px;
	}
</style>
